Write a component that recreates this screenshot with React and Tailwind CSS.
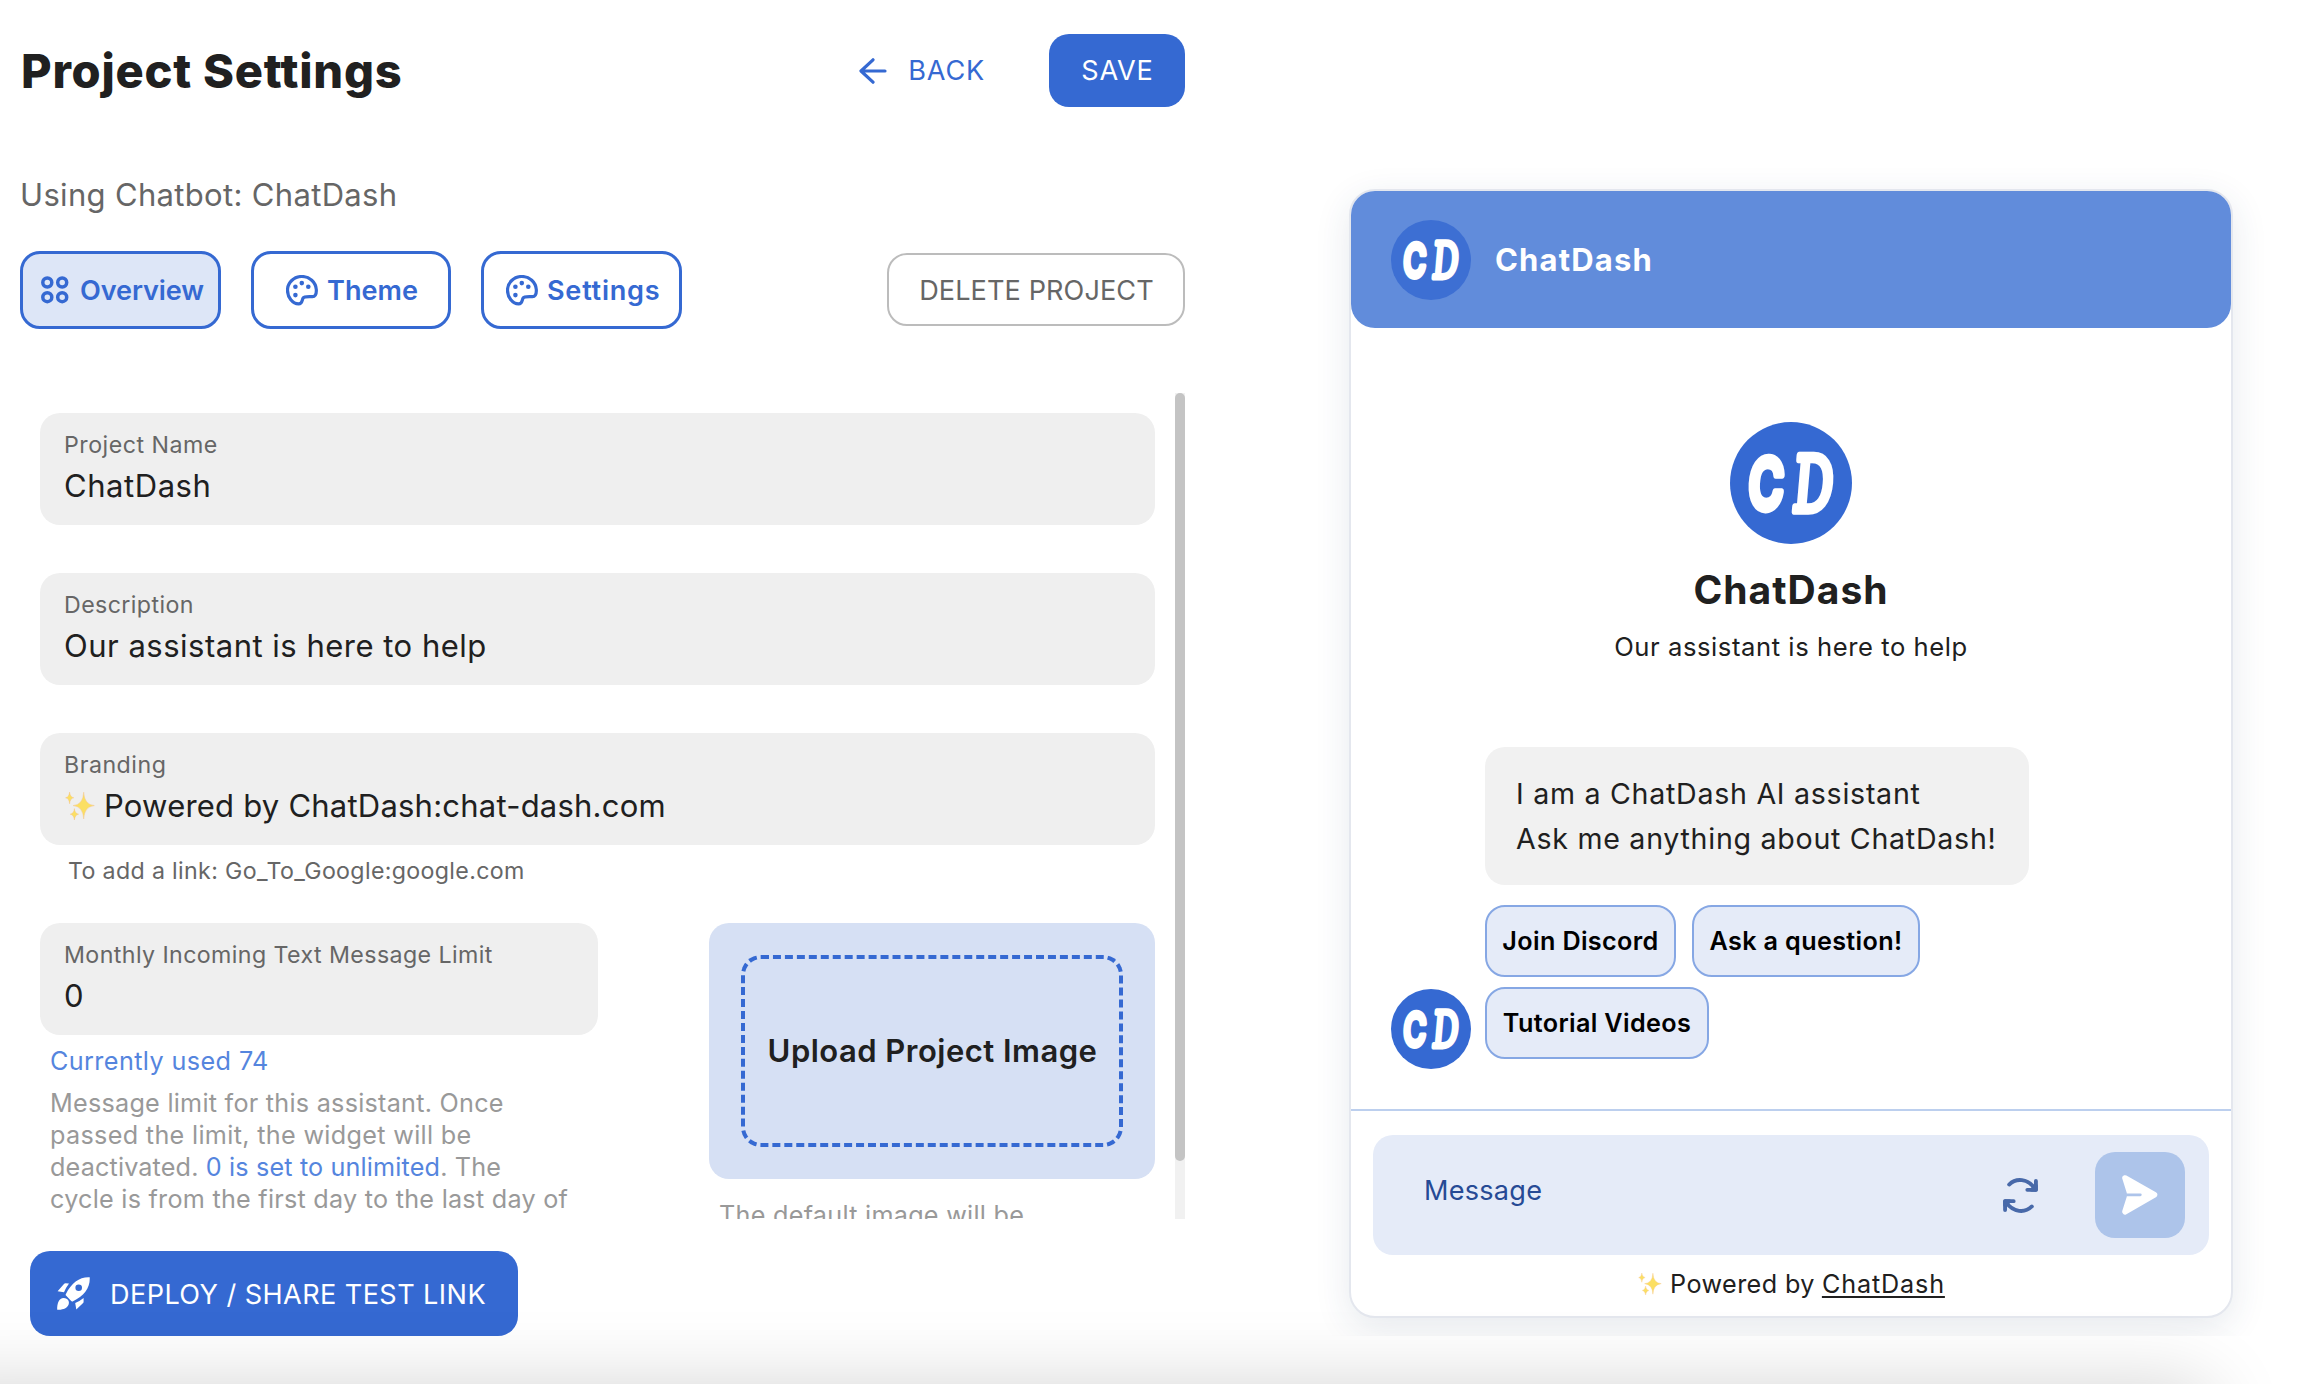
import React from "react";

function LogoMark({ className }) {
  return (
    <svg viewBox="0 0 122 122" className={className}>
      <circle cx="61" cy="61" r="61" fill="currentColor" />
      <g fill="#fff" stroke="#fff" strokeLinejoin="round" strokeLinecap="round" strokeWidth="7.5">
        <text
          transform="translate(17.5 87) skewX(-3) scale(0.68 1)"
          fontFamily="Inter, sans-serif"
          fontWeight="600"
          fontSize="70"
        >
          C
        </text>
        <text
          transform="translate(61.5 89) skewX(-5) scale(0.65 1)"
          fontFamily="'DejaVu Serif', serif"
          fontWeight="400"
          fontSize="76"
        >
          D
        </text>
      </g>
    </svg>
  );
}

function Sparkles({ className }) {
  return (
    <svg viewBox="0 0 30 28" className={className} fill="#fbdf63" stroke="#f6bd7d" strokeWidth="0.4">
      <path d="M18.7 0.2Q19.3 12.6 29.3 13.6Q19.3 14.6 18.7 27Q18.1 14.6 8.1 13.6Q18.1 12.6 18.7 0.2Z" />
      <path d="M4.6 0Q5.1 5.2 8.8 5.8Q5.1 6.4 4.6 11.8Q4.1 6.4 0.6 5.8Q4.1 5.2 4.6 0Z" />
      <path d="M9.4 16.6Q9.9 21.6 13.6 22.2Q9.9 22.8 9.4 28Q8.9 22.8 5.2 22.2Q8.9 21.6 9.4 16.6Z" />
    </svg>
  );
}

function PaletteIcon() {
  return (
    <svg viewBox="0 0 32 31" className="h-[31px] w-8 shrink-0" fill="none">
      <path
        d="M30.3 14.5C29.8 7.2 23.5 1.5 15.8 1.5C8 1.5 1.5 7.6 1.5 15.2C1.5 22.4 6.6 28.7 12.6 28.9C16.4 29 15.8 25.4 17 23.2C18.1 21.4 20.5 21.8 26.3 21.7C29.5 21.5 30.6 19.5 30.3 14.5Z"
        stroke="currentColor"
        strokeWidth="3.2"
        strokeLinejoin="round"
      />
      <g fill="currentColor">
        <circle cx="9.4" cy="11.8" r="2.3" />
        <circle cx="15.8" cy="8.1" r="2.3" />
        <circle cx="22.3" cy="11.8" r="2.3" />
        <circle cx="9.4" cy="20.1" r="2.3" />
      </g>
    </svg>
  );
}

function GridIcon() {
  return (
    <svg viewBox="0 0 28 28" className="size-7 shrink-0" fill="none" stroke="currentColor" strokeWidth="3.5">
      <circle cx="6.3" cy="6.5" r="4.5" />
      <circle cx="21.2" cy="6.5" r="4.5" />
      <circle cx="6.3" cy="21.2" r="4.5" />
      <circle cx="21.2" cy="21.2" r="4.5" />
    </svg>
  );
}

function ArrowLeftIcon() {
  return (
    <svg viewBox="0 0 28 26" className="h-[26px] w-7" fill="none" stroke="currentColor" strokeWidth="3.2" strokeLinecap="round">
      <path d="M26 13H2.5M14 1.8L2 13L14 24.2" strokeLinejoin="round" />
    </svg>
  );
}

function RocketIcon() {
  return (
    <svg viewBox="0 0 33 33" className="size-[33px]" fill="#fff">
      <path
        fillRule="evenodd"
        d="M32.7 0.3C33.4 10 27.5 19.3 15.6 24.4Q14.8 24.7 14.2 24.1L9 18.6Q8.4 18 8.8 17.3C14.5 5.5 23 -0.3 32.7 0.3ZM21.7 7.5A3.3 3.3 0 1 0 21.7 14.1A3.3 3.3 0 1 0 21.7 7.5Z"
      />
      <path d="M0.6 14.2L7.2 6.7Q7.7 6.2 8.4 6.2L12 6.4Q9 10.3 7 15.2Z" />
      <path d="M18.2 26.1Q23 24 26.6 21L26.6 24.8Q26.6 25.5 26.1 26L19.3 32.4Z" />
      <path d="M0.2 32.8C0 26 2 20.9 6.6 20.9C11.2 20.9 13.4 25.2 11 28.7C9 31.8 5 32.8 0.2 32.8Z" />
    </svg>
  );
}

function RefreshIcon() {
  const half = (
    <>
      <path d="M6.2 6.6C13 0 25 -0.2 32.8 11.6" />
      <path d="M33.3 3V12H24.6" />
      <path d="M33.3 8V12H29Z" fill="currentColor" />
    </>
  );
  return (
    <svg
      viewBox="0 0 35.4 35.4"
      className="size-[35px] overflow-visible"
      fill="none"
      stroke="currentColor"
      strokeWidth="3.9"
      strokeLinecap="round"
      strokeLinejoin="round"
    >
      {half}
      <g transform="rotate(180 17.7 17.7)">{half}</g>
    </svg>
  );
}

function SendIcon() {
  return (
    <svg viewBox="0 0 36 40" className="h-10 w-9">
      <path
        d="M3 3L32.5 19.8L3 36.7L7.6 22V17.6Z"
        fill="#fff"
        stroke="#fff"
        strokeWidth="5.6"
        strokeLinejoin="round"
      />
      <path d="M4.5 19.8H18.3" stroke="#adc4ea" strokeWidth="2.8" strokeLinecap="round" />
    </svg>
  );
}

function Field({ label, children, className }) {
  return (
    <div className={`flex h-28 shrink-0 flex-col rounded-[20px] bg-[#efefef] pl-6 pt-[17px] ${className}`}>
      {label}
      <div className="mt-[6px] flex h-10 items-center text-[31px] leading-10 text-[#202020]">{children}</div>
    </div>
  );
}

const labelClass = "text-[23.2px] leading-[30px] text-[#666666]";

function SettingsPanel() {
  return (
    <section className="flex w-[1185px] shrink-0 flex-col pl-5 pt-[34px] font-['Inter',sans-serif]">
      <header className="flex h-[73px] shrink-0 items-center">
        <h1 className="pl-px pt-px text-[47px] font-extrabold leading-[72px] tracking-[0.75px] text-[#202020]">Project Settings</h1>
        <button className="ml-auto flex h-full items-center text-[#3569d2]">
          <ArrowLeftIcon />
          <span className="ml-[21px] pt-[2px] text-[27.1px] tracking-[0.8px]">BACK</span>
        </button>
        <button className="ml-16 flex h-full w-[136px] items-center justify-center rounded-[20px] bg-[#3569d2] pl-px pt-[2px] text-[27.1px] tracking-[0.8px] text-white">
          SAVE
        </button>
      </header>

      <p className="mt-16 text-[31px] leading-[48px] tracking-[0.33px] text-[#666666]">Using Chatbot: ChatDash</p>

      <div className="mt-8 flex h-[78px] shrink-0 items-center text-[27.1px] font-semibold text-[#3569d2]">
        <button className="flex h-full w-[201px] items-center gap-[11px] rounded-[20px] border-[3px] border-[#3569d2] bg-[#dde6f7] pl-[18px]">
          <GridIcon />
          <span className="pt-[2px] tracking-[-0.1px]">Overview</span>
        </button>
        <button className="ml-[30px] flex h-full w-[200px] items-center gap-[9px] rounded-[20px] border-[3px] border-[#3569d2] pl-8">
          <PaletteIcon />
          <span className="pt-[2px]">Theme</span>
        </button>
        <button className="ml-[30px] flex h-full w-[201px] items-center gap-[9px] rounded-[20px] border-[3px] border-[#3569d2] pl-[22px]">
          <PaletteIcon />
          <span className="pt-[2px] tracking-[0.75px]">Settings</span>
        </button>
        <button className="-mt-px ml-auto flex h-[73px] w-[298px] items-center justify-center rounded-[20px] border-2 border-[#bcbcbc] pl-px pt-[3px] font-normal tracking-[0.1px] text-[#666666]">
          DELETE PROJECT
        </button>
      </div>

      <div className="mt-16 flex h-[826px] shrink-0 justify-between overflow-hidden">
        <div className="flex w-[1135px] flex-col pl-5 pt-5">
          <Field label={<span className={`${labelClass} tracking-[0.5px]`}>Project Name</span>} className="">
            <span className="tracking-[0.55px]">ChatDash</span>
          </Field>
          <Field label={<span className={`${labelClass} tracking-[0.4px]`}>Description</span>} className="mt-12">
            <span className="tracking-[0.5px]">Our assistant is here to help</span>
          </Field>
          <Field label={<span className={`${labelClass} tracking-[0.5px]`}>Branding</span>} className="mt-12">
            <Sparkles className="ml-px h-7 w-[30px]" />
            <span className="ml-[9px] tracking-[0.22px]">Powered by ChatDash:chat-dash.com</span>
          </Field>
          <p className="ml-7 mt-[10px] shrink-0 text-[23.2px] leading-8 tracking-[0.34px] text-[#666666]">
            To add a link: Go_To_Google:google.com
          </p>

          <div className="mt-9 flex shrink-0 items-start justify-between">
            <div className="flex w-[558px] flex-col">
              <Field
                label={<span className={`${labelClass} tracking-[0.41px]`}>Monthly Incoming Text Message Limit</span>}
                className=""
              >
                <span>0</span>
              </Field>
              <p className="ml-[10px] mt-[10px] text-[25.2px] leading-8 tracking-[0.4px] text-[#5585de]">Currently used 74</p>
              <p className="ml-[10px] mt-[10px] whitespace-nowrap text-[25.2px] leading-8 tracking-[0.25px] text-[#999999]">
                <span className="block">Message limit for this assistant. Once</span>
                <span className="block tracking-[0.32px]">passed the limit, the widget will be</span>
                <span className="block tracking-[0.15px]">
                  deactivated. <span className="text-[#5585de]">0 is set to unlimited</span>. The
                </span>
                <span className="block">cycle is from the first day to the last day of</span>
              </p>
            </div>
            <div className="flex w-[446px] flex-col">
              <div className="flex h-64 shrink-0 flex-col rounded-[20px] bg-[#d6e0f4] p-8">
                <div className="flex h-full items-center justify-center rounded-[20px] border-4 border-dashed border-[#3569d2] pl-px text-[31px] font-semibold tracking-[0.48px] text-[#202020]">
                  Upload Project Image
                </div>
              </div>
              <p className="ml-[10px] mt-5 text-[25.2px] leading-8 tracking-[0.27px] text-[#999999]">
                The default image will be
              </p>
            </div>
          </div>
        </div>
        <div className="h-full w-[10px] bg-[#f1f1f1]">
          <div className="h-[768px] rounded-full bg-[#c4c4c4]" />
        </div>
      </div>

      <button className="ml-[10px] mt-8 flex h-[85px] w-[488px] shrink-0 items-center rounded-[20px] bg-[#3569d2] pl-[27px] text-[27.1px] text-white">
        <RocketIcon />
        <span className="ml-5 pt-[3px] tracking-[0.42px]">DEPLOY / SHARE TEST LINK</span>
      </button>
    </section>
  );
}

function QuickReply({ children, className }) {
  return (
    <button
      className={`flex h-[72px] items-center justify-center rounded-[20px] border-2 border-[#86a7e4] bg-[#e5ebf8] pt-[2px] text-[25.2px] font-semibold tracking-[0.35px] text-black ${className}`}
    >
      {children}
    </button>
  );
}

function ChatPreview() {
  return (
    <section className="ml-[164px] mt-[189px] flex h-[1129px] w-[884px] flex-col rounded-[26px] border-2 border-[#e4e7ee] bg-white font-['Inter',sans-serif] text-[#202020] shadow-[0_10px_36px_rgba(40,60,100,0.11)]">
      <header className="flex h-[137px] shrink-0 items-center rounded-[24px] bg-[#618cdb] pl-10">
        <LogoMark className="size-20 text-[#3d6fd3]" />
        <span className="ml-6 pt-[2px] text-[31px] font-bold tracking-[1.15px] text-white">ChatDash</span>
      </header>

      <div className="mt-[94px] flex flex-col items-center">
        <LogoMark className="size-[122px] text-[#3569d2]" />
        <h2 className="mt-[22px] text-[39px] font-bold leading-[48px] tracking-[1px]">ChatDash</h2>
        <p className="mt-[17px] text-[25.6px] leading-8 tracking-[0.57px]">Our assistant is here to help</p>
      </div>

      <div className="mt-[84px] flex items-end pl-10">
        <LogoMark className="-mb-[10px] size-20 text-[#3569d2]" />
        <div className="ml-[14px] flex flex-col">
          <div className="h-[138px] w-[544px] rounded-[20px] bg-[#f1f1f1] pl-[31px] pt-6 text-[28.6px] leading-[45px] tracking-[0.72px]">
            <p>I am a ChatDash AI assistant</p>
            <p>Ask me anything about ChatDash!</p>
          </div>
          <div className="mt-5 flex gap-4">
            <QuickReply className="w-[191px]">Join Discord</QuickReply>
            <QuickReply className="w-[228px]">Ask a question!</QuickReply>
          </div>
          <div className="mt-[10px] flex">
            <QuickReply className="w-[224px]">Tutorial Videos</QuickReply>
          </div>
        </div>
      </div>

      <div className="mt-[50px] flex flex-col border-t-2 border-[#bccfee] px-[22px] pt-6">
        <div className="flex h-[120px] items-center rounded-[20px] bg-[#e5ebf8] pl-[51px] pr-6">
          <span className="-mt-2 text-[27.1px] tracking-[0.25px] text-[#264a95]">Message</span>
          <span className="ml-auto text-[#4869a9]">
            <RefreshIcon />
          </span>
          <button className="ml-[57px] flex h-[86px] w-[90px] items-center justify-center rounded-[20px] bg-[#adc4ea]">
            <SendIcon />
          </button>
        </div>
        <p className="mt-[11px] flex h-9 items-center justify-center pl-px text-[25.2px] leading-9">
          <Sparkles className="h-[22px] w-6" />
          <span className="ml-2 tracking-[0.4px]">Powered by</span>
          <span className="ml-[7px] tracking-[0.85px] underline decoration-2 underline-offset-[3px]">ChatDash</span>
        </p>
      </div>
    </section>
  );
}

export default function App() {
  return (
    <div className="relative h-[1384px] w-[2304px] overflow-hidden bg-white">
      <main className="flex h-[1336px] items-start overflow-hidden">
        <SettingsPanel />
        <ChatPreview />
      </main>
      <div className="pointer-events-none absolute -left-20 top-full h-40 w-[2290px] rounded-[20px] shadow-[0_0_75px_rgba(0,0,0,0.17)]" />
    </div>
  );
}
